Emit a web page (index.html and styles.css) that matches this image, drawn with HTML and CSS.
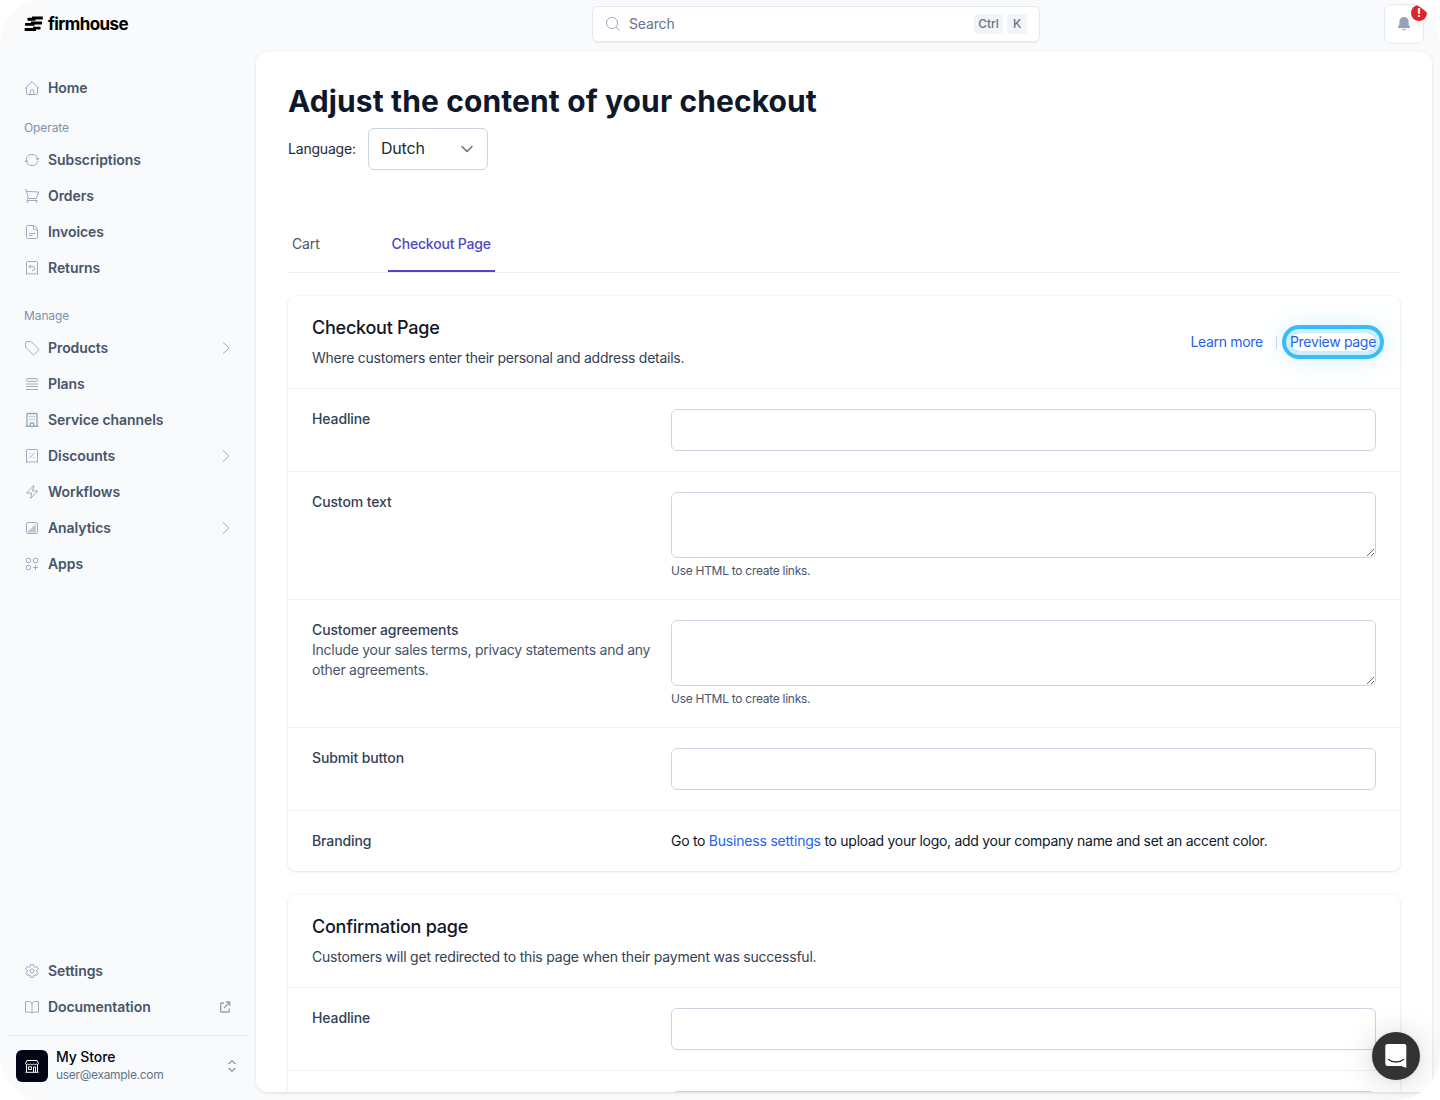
FILE: index.html
```html
<!DOCTYPE html>
<html lang="en">
<head>
<meta charset="utf-8">
<title>Checkout content - Firmhouse</title>
<link rel="stylesheet" href="styles.css">
</head>
<body>
<div class="app">
  <header class="topbar">
    <a class="logo">
      <svg width="20" height="16" viewBox="0 0 20 16"><path fill="#000" d="M8 .5h10.800v2.900H11.500v1.300H3.500V1.800H8zM7 5.600h11v2.900H10.500v1.300H1V6.900h6zM9 10.700h7.500v2.900H12v1.300H.6V12H9z"/></svg>
      <span class="logo-text">firmhouse</span>
    </a>
    <div class="search">
      <svg class="icon" width="16" height="16" viewBox="0 0 16 16"><circle cx="7" cy="7" r="5.600"/><path d="M11 11l3.500 3.700"/></svg>
      <span class="search-text">Search</span>
      <kbd class="kbd-ctrl">Ctrl</kbd><kbd class="kbd-k">K</kbd>
    </div>
    <button class="bell">
      <svg width="14" height="16" viewBox="0 0 14 16"><path fill="#94a3b8" d="M7 1a4.600 4.600 0 0 0-4.600 4.600v3L1 11v1h12v-1l-1.400-2.400v-3A4.600 4.600 0 0 0 7 1zM5 12.500a2 2 0 0 0 4 0h-1a1 1 0 0 1-2 0z"/></svg>
      <span class="badge">!</span>
    </button>
  </header>

  <aside class="sidebar">
    <nav class="nav">
      <a class="item"><svg class="icon" width="16" height="16" viewBox="0 0 16 16"><path d="M1.300 8.200L8 1.500l6.700 6.700M2.500 7.200v6.300a1 1 0 0 0 1 1h9a1 1 0 0 0 1-1V7.200M6.200 14.500v-3a1.800 1.800 0 0 1 3.600 0v3"/></svg><span>Home</span></a>
      <h2 class="group">Operate</h2>
      <a class="item"><svg class="icon" width="16" height="16" viewBox="0 0 16 16"><path d="M2.500 8.500V7A4.500 4.500 0 0 1 7 2.500h2A4.500 4.500 0 0 1 13.500 7v.8M11.500 6l2 2 1.800-2M13.500 8.800A4.700 4.700 0 0 1 9 13.500H7A4.500 4.500 0 0 1 2.500 9V8M.7 10l1.800-2 2 2"/></svg><span>Subscriptions</span></a>
      <a class="item"><svg class="icon" width="16" height="16" viewBox="0 0 16 16"><path d="M.8 1.800h1.500l2 8.700h8.200l2-6.500-11.500-.6M4.300 10.500l-1.300 2h10.700"/><circle cx="3.700" cy="14" r=".5"/><circle cx="12.500" cy="14" r=".5"/></svg><span>Orders</span></a>
      <a class="item"><svg class="icon" width="16" height="16" viewBox="0 0 16 16"><path d="M3.500 1.500h5c2.500 0 5 2.500 5 5v7a1 1 0 0 1-1 1h-9a1 1 0 0 1-1-1v-11a1 1 0 0 1 1-1zM8.500 1.500c1.300.5 1 2 1 4h1c1.500 0 2.500.5 3 1.500M5 9.500h6M5 11.500h3.500"/></svg><span>Invoices</span></a>
      <a class="item"><svg class="icon" width="16" height="16" viewBox="0 0 16 16"><path d="M2.500 14.500v-12a1 1 0 0 1 1-1h9a1 1 0 0 1 1 1v12l-1.800-1.200-1.900 1.200L8 13.300l-1.800 1.200-1.900-1.200zM6.800 4.800L5 6.600l1.800 1.800M5 6.600h4a1.900 1.900 0 0 1 0 3.800H8"/></svg><span>Returns</span></a>
      <h2 class="group group-manage">Manage</h2>
      <a class="item"><svg class="icon" width="16" height="16" viewBox="0 0 16 16"><path d="M3 1.500h3.600a1.500 1.500 0 0 1 1 .4l6.600 6.600a1.400 1.400 0 0 1 0 2l-3.600 3.600a1.400 1.400 0 0 1-2 0L1.900 7.500a1.400 1.400 0 0 1-.4-1V3A1.500 1.500 0 0 1 3 1.500z"/></svg><span>Products</span><svg class="icon chev" width="16" height="16" viewBox="0 0 16 16"><path d="M5 2.300L11 8l-6 5.700"/></svg></a>
      <a class="item"><svg class="icon" width="16" height="16" viewBox="0 0 16 16"><path d="M3.500 2.500h9a1 1 0 0 1 1 1v.8a1 1 0 0 1-1 1h-9a1 1 0 0 1-1-1v-.8a1 1 0 0 1 1-1zM2 8h12M2 10.500h12M2 13.500h12"/></svg><span>Plans</span></a>
      <a class="item"><svg class="icon" width="16" height="16" viewBox="0 0 16 16"><path stroke-width="1.300" d="M1.500 14.300h13M3 14.500v-12a1 1 0 0 1 1-1h8a1 1 0 0 1 1 1v12M6.300 14.500v-3a.5.500 0 0 1 .5-.5h2.400a.5.500 0 0 1 .5.500v3M5.300 4.500h1M7.500 4.500h1M9.700 4.500h1M5.300 7.500h1M7.500 7.500h1M9.700 7.500h1"/></svg><span>Service channels</span></a>
      <a class="item"><svg class="icon" width="16" height="16" viewBox="0 0 16 16"><path d="M2.500 14.500v-12a1 1 0 0 1 1-1h9a1 1 0 0 1 1 1v12l-1.800-1.200-1.900 1.200L8 13.300l-1.800 1.200-1.900-1.200zM5.500 10l5-5M5.500 5.500h1M9.500 9.500h1"/></svg><span>Discounts</span><svg class="icon chev" width="16" height="16" viewBox="0 0 16 16"><path d="M5 2.300L11 8l-6 5.700"/></svg></a>
      <a class="item"><svg class="icon" width="16" height="16" viewBox="0 0 16 16"><path d="M2.500 9L9.800 1.500 8.500 7h5.200L6.500 14.500 7.700 9z"/></svg><span>Workflows</span></a>
      <a class="item"><svg class="icon" width="16" height="16" viewBox="0 0 16 16"><rect x="2.500" y="2.500" width="11" height="11" rx="1.300"/><path class="fill" d="M4 12.500V10h2V8.500h2V6.500h2V4.500h2v8z"/></svg><span>Analytics</span><svg class="icon chev" width="16" height="16" viewBox="0 0 16 16"><path d="M5 2.300L11 8l-6 5.700"/></svg></a>
      <a class="item"><svg class="icon" width="16" height="16" viewBox="0 0 16 16"><rect x="2.300" y="2.300" width="4.400" height="4.400" rx="1.700"/><rect x="9.300" y="2.300" width="4.400" height="4.400" rx="1.700"/><rect x="2.300" y="9.300" width="4.400" height="4.400" rx="1.700"/><path d="M11.500 9v5M9 11.500h5"/></svg><span>Apps</span></a>
    </nav>
    <nav class="nav">
      <a class="item"><svg class="icon" width="16" height="16" viewBox="0 0 16 16"><circle cx="8" cy="8" r="2"/><path d="M6.700 1.500h2.600l.4 1.900 1.300.8 1.900-.6 1.300 2.200-1.400 1.400v1.600l1.400 1.400-1.300 2.200-1.900-.6-1.300.8-.4 1.900H6.700l-.4-1.900-1.300-.8-1.900.6-1.300-2.200 1.400-1.400V7.200L1.800 5.800l1.300-2.200 1.900.6 1.300-.8z"/></svg><span>Settings</span></a>
      <a class="item"><svg class="icon" width="16" height="16" viewBox="0 0 16 16"><path d="M8 4C6.500 2.500 4 2.200 1.500 2.700v10.600C4 12.800 6.500 13 8 14c1.500-1 4-1.200 6.500-.7V2.700C12 2.200 9.500 2.500 8 4zM8 4v10"/></svg><span>Documentation</span><svg class="icon ext" width="16" height="16" viewBox="0 0 16 16"><path d="M6 4H3.200a.5.500 0 0 0-.5.500v8a.5.500 0 0 0 .5.500h7.500a.5.500 0 0 0 .5-.5V9.500M7.800 3h4v4M11.800 3L6 9"/></svg></a>
    </nav>
    <div class="account">
      <span class="avatar"><svg width="16" height="16" viewBox="0 0 16 16" fill="none" stroke="#fff"><path d="M2.500 6.500v7.500M13.500 14V6.500M1.500 14.300h13M3 2.500h10l1.500 3c0 1-1.500 1.500-2.200.5-.8 1-2 1-2.800 0-.8 1-2.200 1-3 0-.8 1-2 1-2.800 0-.7 1-2.200.5-2.200-.5zM4.500 8.800h3v2.700h-3zM9.500 14V9h2v5"/></svg></span>
      <div class="who"><div class="store">My Store</div><div class="mail">user@example.com</div></div>
      <svg class="updown" width="16" height="16" viewBox="0 0 16 16"><path d="M4.500 6L8 2.500 11.500 6M4.500 10L8 13.500 11.500 10"/></svg>
    </div>
  </aside>

  <main class="panel">
    <h1>Adjust the content of your checkout</h1>
    <div class="language">
      <span class="lang-label">Language:</span>
      <div class="select"><span>Dutch</span><svg width="20" height="20" viewBox="0 0 20 20"><path d="M5 7.500l5 5 5-5"/></svg></div>
    </div>
    <div class="tabs"><a class="tab">Cart</a><a class="tab active">Checkout Page</a></div>

    <section class="card">
      <div class="card-head">
        <div><h3>Checkout Page</h3><p>Where customers enter their personal and address details.</p></div>
        <div class="links"><a>Learn more</a><i class="sep"></i><a class="ring">Preview page</a></div>
      </div>
      <div class="row"><label>Headline</label><input type="text"></div>
      <div class="row"><label>Custom text</label><div><textarea></textarea><p class="hint">Use HTML to create links.</p></div></div>
      <div class="row"><label>Customer agreements<small>Include your sales terms, privacy statements and any other agreements.</small></label><div><textarea></textarea><p class="hint">Use HTML to create links.</p></div></div>
      <div class="row"><label>Submit button</label><input type="text"></div>
      <div class="row"><label>Branding</label><p class="brand">Go to <a>Business settings</a> to upload your logo, add your company name and set an accent color.</p></div>
    </section>

    <section class="card">
      <div class="card-head">
        <div><h3>Confirmation page</h3><p class="wide">Customers will get redirected to this page when their payment was successful.</p></div>
      </div>
      <div class="row"><label>Headline</label><input type="text"></div>
      <div class="row"><label></label><div><textarea></textarea></div></div>
    </section>
  </main>
  <button class="chat"><svg width="24" height="26" viewBox="0 0 24 26"><path fill="#fff" d="M3.500 1h17A1.800 1.800 0 0 1 22.300 2.800V25l-5-2H3.500A2.200 2.200 0 0 1 1.300 20.800V3.200A2.200 2.200 0 0 1 3.500 1z"/><path d="M4.500 16.500c4 3.300 11 3.300 15 0" fill="none" stroke="#333" stroke-width="1.400" stroke-linecap="round"/></svg></button>
</div>
</body>
</html>
```
FILE: styles.css
```css
* { box-sizing: border-box; }
body { margin: 0; background: #fff; font-family: Inter, "Liberation Sans", sans-serif; font-size: 14px; line-height: 20px; color: #0f172a; }
h1, h2, h3, p { margin: 0; }
.app { position: relative; width: 1440px; height: 1100px; overflow: hidden; border-radius: 44px; background: #f8fafc; display: grid; grid-template: 52px 1fr / 256px 1fr; }
.icon { fill: none; stroke: #94a3b8; stroke-width: .9; stroke-linejoin: round; flex: none; }
.icon .fill { fill: #bcc8d8; stroke: none; }

.topbar { grid-column: 1 / 3; display: grid; grid-template-columns: 568px 448px 1fr; padding: 4px 16px 4px 24px; }
.logo { display: flex; align-items: center; gap: 4px; height: 40px; }
.logo-text { font-weight: 700; font-size: 17px; letter-spacing: -.6px; color: #000; }
.search { display: flex; align-items: center; height: 36px; margin-top: 2px; padding: 0 12px; border: 1px solid #e2e8f0; border-radius: 6px; background: #fff; box-shadow: 0 1px 2px rgba(15,23,42,.05); color: #64748b; }
.search-text { flex: 1; margin-left: 8px; letter-spacing: -.15px; }
kbd { height: 20px; padding: 0 4px; border-radius: 4px; background: #f1f5f9; font: 500 12px/20px Inter, sans-serif; text-align: center; }
.kbd-ctrl { width: 29px; margin-right: 4px; }
.kbd-k { width: 20px; }
.bell { position: relative; justify-self: end; display: grid; place-items: center; width: 40px; height: 40px; padding: 0; border: 1px solid #e2e8f0; border-radius: 8px; background: #fff; }
.badge { position: absolute; top: 0; right: -4px; width: 16px; height: 16px; border-radius: 8px; background: #dc2626; color: #fff; font: 700 12px/16px Inter, sans-serif; }

.sidebar { display: flex; flex-direction: column; padding: 18px 8px 8px; }
.nav:first-child { flex: 1; }
.item { display: flex; align-items: center; height: 36px; padding: 0 14px 0 16px; gap: 8px; font-weight: 600; letter-spacing: -.07px; color: #475569; }
.item .chev, .item .ext { margin-left: auto; }
.item .ext { stroke-width: 1.4; }
.group { margin-top: 8px; padding-left: 16px; font-size: 12px; line-height: 28px; font-weight: 400; letter-spacing: -.1px; color: #8190a5; }
.group-manage { margin-top: 16px; }
.account { display: flex; align-items: center; gap: 8px; margin-top: 10px; padding: 13px 8px 9px; border-top: 1px solid #e2e8f0; }
.avatar { display: grid; place-items: center; width: 32px; height: 32px; border-radius: 6px; background: #020617; }
.who { flex: 1; }
.store { padding-bottom: 2px; font-weight: 500; line-height: 16px; letter-spacing: -.1px; color: #020617; }
.mail { font-size: 12px; line-height: 16px; letter-spacing: -.31px; color: #64748b; }
.updown { fill: none; stroke: #475569; stroke-width: 1; }

.panel { height: 1040px; margin-right: 8px; padding: 31px 32px 0; overflow: hidden; border-radius: 12px; background: #fff; box-shadow: 0 1px 3px rgba(15,23,42,.12); }
h1 { font-size: 30px; line-height: 36px; font-weight: 700; letter-spacing: .11px; }
.language { display: flex; align-items: center; gap: 12px; margin-top: 9px; }
.lang-label { width: 68px; letter-spacing: -.2px; color: #1e293b; }
.select { display: flex; align-items: center; justify-content: space-between; width: 120px; height: 42px; padding: 0 10px 0 12px; border: 1px solid #cbd5e1; border-radius: 6px; font-size: 16px; letter-spacing: -.2px; color: #1e293b; }
.select span { padding-bottom: 2px; }
.select svg { fill: none; stroke: #6b7280; stroke-width: 1.5; stroke-linecap: round; stroke-linejoin: round; }
.tabs { display: flex; gap: 64px; height: 57px; margin-top: 46px; border-bottom: 1px solid #edf0f3; }
.tab { height: 56px; padding: 18px 4px 0; letter-spacing: -.15px; color: #4b5563; }
.tab.active { width: 107px; font-weight: 500; letter-spacing: -.18px; white-space: nowrap; color: #4f46c8; border-bottom: 2px solid #4f46c8; }
.card { margin: 23px 0 24px; border-radius: 8px; background: #fff; box-shadow: 0 0 0 1px rgba(15,23,42,.02), 0 1px 3px rgba(15,23,42,.1); }
.card-head { display: flex; align-items: center; justify-content: space-between; height: 92px; padding: 0 24px; color: #334155; }
h3 { margin-top: -2px; font-size: 18px; line-height: 28px; font-weight: 500; letter-spacing: -.24px; color: #0f172a; }
.card-head p { margin-top: 6px; letter-spacing: -.26px; }
.card-head p.wide { letter-spacing: -.215px; }
.links { display: flex; align-items: center; letter-spacing: -.31px; color: #2563eb; }
.sep { width: 1px; height: 13px; margin: 0 13px; background: #cbd5e1; }
.ring { line-height: 18px; border-radius: 9px; box-shadow: 0 0 0 4px #cceffc, 0 0 0 8px #38bdf8, 0 0 26px 8px rgba(56,189,248,.2); }
.row { display: grid; grid-template-columns: 359px 705px; padding: 20px 24px; border-top: 1px solid #edf2f7; }
label { font-weight: 500; letter-spacing: -.12px; color: #334155; }
small { display: block; width: 345px; font-size: 14px; font-weight: 400; letter-spacing: -.26px; color: #475569; }
input, textarea { display: block; width: 705px; height: 42px; margin: 0; padding: 8px 12px; border: 1px solid #cbd5e1; border-radius: 6px; background: #fff; font: inherit; }
textarea { height: 66px; resize: vertical; }
.hint { margin-top: 5px; font-size: 12px; line-height: 16px; letter-spacing: -.28px; color: #475569; }
.brand { letter-spacing: -.29px; }
.brand a { letter-spacing: -.2px; color: #2563eb; }
.chat { position: absolute; right: 20px; bottom: 20px; display: grid; place-items: center; width: 48px; height: 48px; padding: 0; border: 0; border-radius: 24px; background: #333; box-shadow: 0 1px 6px rgba(0,0,0,.06), 0 2px 32px rgba(0,0,0,.16); }
```
